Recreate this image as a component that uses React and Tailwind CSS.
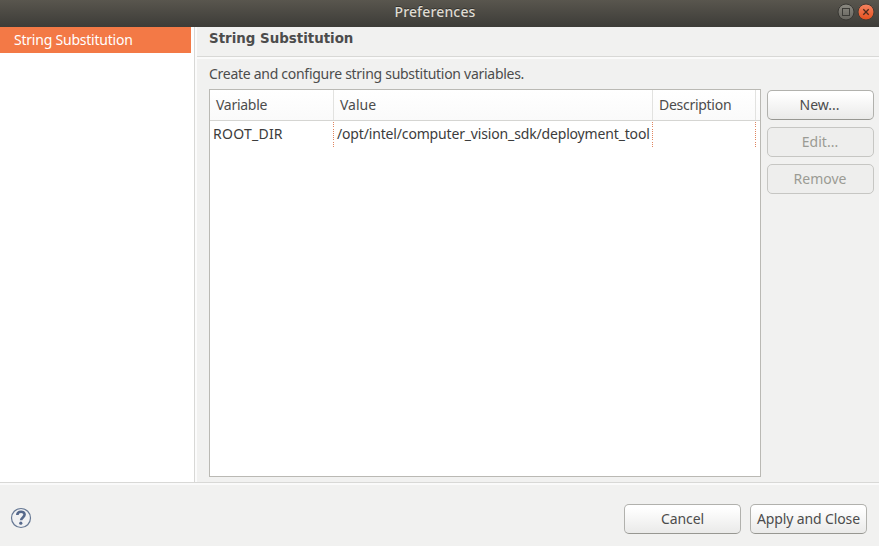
import React from "react";

function Button({ children, disabled = false, className = "" }) {
  const look = disabled
    ? "border-[#c6c6c3] bg-[#eeeeed] text-[#9b9b94]"
    : "border-[#b1b1ad] border-b-[#979792] bg-linear-to-b from-white from-10% to-[#eaeae9] text-[#4c4c4c]";
  return (
    <button
      disabled={disabled}
      className={`flex h-[30px] shrink-0 items-center justify-center whitespace-nowrap rounded-[5px] border ${look} ${className}`}
    >
      {children}
    </button>
  );
}

function TitleBar() {
  return (
    <header className="relative flex h-[27px] shrink-0 items-center justify-center bg-linear-to-b from-[#59564e] to-[#3d3c38] pr-[9px] pb-[3px] text-[#dfdbd2]">
      <h1 className="text-[14px] font-medium tracking-[0.15px] [text-shadow:0_-1px_0_#33322e]">Preferences</h1>
      <div className="absolute top-[3px] right-1 flex gap-[2px]">
        <svg width="18" height="18" viewBox="0 0 18 18">
          <defs>
            <linearGradient id="max" x1="0" y1="0" x2="0" y2="1">
              <stop offset="0" stopColor="#8b8981" />
              <stop offset="1" stopColor="#66645e" />
            </linearGradient>
          </defs>
          <circle cx="9" cy="9" r="8" fill="url(#max)" stroke="#383733" />
          <rect x="5.5" y="5.5" width="7" height="7" fill="none" stroke="#3c3b37" />
        </svg>
        <svg width="18" height="18" viewBox="0 0 18 18">
          <defs>
            <linearGradient id="close" x1="0" y1="0" x2="0" y2="1">
              <stop offset="0" stopColor="#f58462" />
              <stop offset="1" stopColor="#e34f1c" />
            </linearGradient>
          </defs>
          <circle cx="9" cy="9" r="8" fill="url(#close)" stroke="#443a33" />
          <path d="M6.3 6.3l5.4 5.4M11.7 6.3l-5.4 5.4" stroke="#4a2a1c" strokeWidth="1.3" />
        </svg>
      </div>
    </header>
  );
}

const dotted =
  "border-r border-transparent [border-image:repeating-linear-gradient(to_bottom,#e0855f_0_1px,transparent_1px_2px)_1]";

function VariableTable() {
  return (
    <div className="h-[388px] w-[552px] shrink-0 border border-[#bab9b4] bg-white">
      <div className="flex h-[31px] border-b border-[#d5d5d2] bg-linear-to-b from-white to-[#fafafa] text-[#4c4c4c]">
        <div className="flex w-[124px] items-center border-r border-[#e2e2e0] pl-[6px]">Variable</div>
        <div className="flex w-[319px] items-center border-r border-[#e2e2e0] pl-[6px] tracking-normal">Value</div>
        <div className="flex w-[103px] items-center border-r border-[#e2e2e0] pl-[6px]">Description</div>
      </div>
      <div className="flex h-[27px] whitespace-nowrap text-[#3c3c3c]">
        <div className={`flex w-[124px] items-center pb-[2px] pl-[3px] tracking-[0.25px] ${dotted}`}>ROOT_DIR</div>
        <div className={`flex w-[319px] items-center pb-[2px] pl-[3px] tracking-[-0.16px] ${dotted}`}>
          <span>/opt/intel/computer_vision_sdk/deployment_tool</span>
        </div>
        <div className={`w-[103px] ${dotted}`} />
      </div>
    </div>
  );
}

export default function App() {
  return (
    <div className="flex h-[546px] w-[879px] flex-col overflow-hidden bg-[#f1f1f0] font-['Noto_Sans',sans-serif] text-[14px] leading-5 tracking-[-0.28px] text-[#4c4c4c]">
      <TitleBar />
      <div className="flex h-[455px] shrink-0">
        <aside className="w-[195px] shrink-0 border-r border-[#d8d8d6] bg-white">
          <div className="flex h-[26px] w-[191px] items-center bg-[#f37946] pl-[14px] tracking-[-0.22px] text-white">String Substitution</div>
        </aside>
        <main className="flex flex-1 flex-col border-l-2 border-[#fbfbfb]">
          <div className="h-[30px] shrink-0 border-b border-[#d8d8d6] pt-[2px] pl-3 font-['DejaVu_Sans',sans-serif] text-[13.4px] font-bold tracking-normal">
            String Substitution
          </div>
          <div className="h-[2px] shrink-0 bg-[#fafafa]" />
          <div className="h-[30px] shrink-0 pt-[5px] pl-3">Create and configure string substitution variables.</div>
          <div className="flex gap-[6px] pl-3">
            <VariableTable />
            <div className="flex flex-col gap-[7px] pt-px tracking-normal">
              <Button className="w-[107px] pr-[2px]">New...</Button>
              <Button className="w-[107px] pr-px" disabled>Edit...</Button>
              <Button className="w-[107px] pr-px" disabled>Remove</Button>
            </div>
          </div>
        </main>
      </div>
      <footer className="flex flex-1 flex-col border-t border-[#d8d8d6]">
        <div className="h-[2px] shrink-0 bg-[#fafafa]" />
        <div className="flex items-start pt-[19px] pr-3 pl-[10px]">
          <svg className="mt-[3px]" width="22" height="22" viewBox="0 0 22 22">
            <circle cx="11" cy="11" r="9.5" fill="#f0f1f3" stroke="#667894" strokeWidth="1.2" />
            <path d="M7.3 8C7.5 3.7 14.6 3.7 14.6 7.6C14.6 10.4 11.1 10.4 11.1 13.3" fill="none" stroke="#55688b" strokeWidth="2.6" />
            <circle cx="10.8" cy="16.2" r="1.6" fill="#55688b" />
          </svg>
          <div className="ml-auto flex gap-[9px] tracking-[-0.13px]">
            <Button className="w-[117px]">Cancel</Button>
            <Button className="w-[117px]">Apply and Close</Button>
          </div>
        </div>
      </footer>
    </div>
  );
}
